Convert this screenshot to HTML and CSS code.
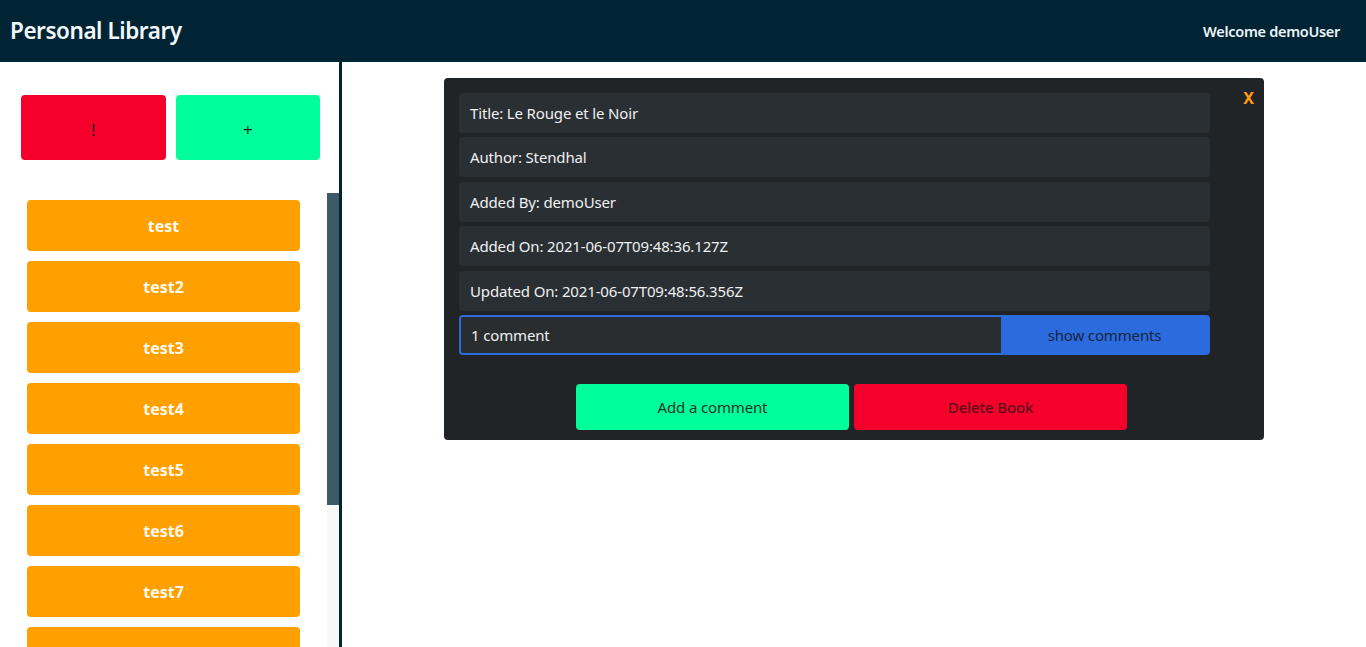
FILE: index.html
```html
<!DOCTYPE html>
<html>
<head>
<meta charset="utf-8">
<link rel="stylesheet" href="styles.css">
</head>
<body>
<header class="topbar">
  <h1 class="brand">Personal Library</h1>
  <div class="welcome">Welcome demoUser</div>
</header>
<div class="main">
  <aside class="sidebar">
    <div class="actions">
      <button class="act act-red">!</button>
      <button class="act act-green">+</button>
    </div>
    <div class="listwrap">
      <ul class="booklist">
        <li class="book">test</li>
        <li class="book">test2</li>
        <li class="book">test3</li>
        <li class="book">test4</li>
        <li class="book">test5</li>
        <li class="book">test6</li>
        <li class="book">test7</li>
        <li class="book">test8</li>
      </ul>
      <div class="scrollbar"><div class="thumb"></div></div>
    </div>
  </aside>
  <section class="content">
    <div class="modal">
      <div class="rows">
        <div class="row">Title: Le Rouge et le Noir</div>
        <div class="row">Author: Stendhal</div>
        <div class="row">Added By: demoUser</div>
        <div class="row">Added On: 2021-06-07T09:48:36.127Z</div>
        <div class="row">Updated On: 2021-06-07T09:48:56.356Z</div>
        <div class="comment-row">
          <div class="comment-input">1 comment</div>
          <div class="comment-btn">show comments</div>
        </div>
        <div class="buttons">
          <button class="mbtn mbtn-green">Add a comment</button>
          <button class="mbtn mbtn-red">Delete Book</button>
        </div>
      </div>
      <div class="close">X</div>
    </div>
  </section>
</div>
</body>
</html>
```
FILE: styles.css
```css
* { box-sizing: border-box; }
html, body { margin: 0; padding: 0; height: 100%; overflow: hidden; }
body {
  font-family: "Noto Sans", "Open Sans", sans-serif;
  background: #ffffff;
}
.topbar {
  height: 62px;
  background: #012434;
  display: flex;
  align-items: center;
  justify-content: space-between;
  padding: 0 26px 0 10px;
}
.brand {
  margin: 0;
  color: #f2f8fb;
  font-size: 22.5px;
  font-weight: 600;
  letter-spacing: -0.45px;
  padding-bottom: 2px;
}
.welcome {
  color: #eef4f8;
  font-size: 14.5px;
  font-weight: 600;
  letter-spacing: -0.3px;
  padding-bottom: 1px;
}
.main {
  display: flex;
  height: calc(100% - 62px);
}
.sidebar {
  width: 342px;
  border-right: 3px solid #012434;
  display: flex;
  flex-direction: column;
}
.actions {
  display: flex;
  gap: 10px;
  padding: 33px 19px 0 21px;
}
.act {
  flex: 1;
  height: 65px;
  border: none;
  border-radius: 4px;
  font-family: inherit;
  font-size: 17px;
  color: #1c1c1c;
  padding-top: 4px;
}
.act-red { background: #f5002a; }
.act-green { background: #00fe9b; }
.listwrap {
  margin-top: 33px;
  flex: 1;
  display: flex;
  overflow: hidden;
}
.booklist {
  list-style: none;
  margin: 0;
  padding: 7px 0 0 27px;
  width: 327px;
}
.book {
  width: 273px;
  height: 51px;
  margin-bottom: 10px;
  background: #ffa000;
  border-radius: 4px;
  color: #fff9ee;
  font-weight: 700;
  font-size: 16px;
  display: flex;
  align-items: center;
  justify-content: center;
}
.scrollbar {
  width: 12px;
  background: #f8f8f8;
}
.thumb {
  height: 312px;
  background: #3d5a66;
}
.content {
  flex: 1;
  padding: 16px 0 0 102px;
}
.modal {
  width: 820px;
  height: 362px;
  background: #202427;
  border-radius: 4px;
  display: flex;
  padding: 15px 0 10px 15px;
}
.rows {
  width: 751px;
  display: flex;
  flex-direction: column;
  gap: 4.5px;
}
.row {
  height: 40px;
  background: #2a2f33;
  border-radius: 4px;
  color: #eef0f2;
  font-size: 15px;
  display: flex;
  align-items: center;
  padding: 0 11px 0;
  letter-spacing: -0.15px;
}
.comment-row {
  height: 40px;
  display: flex;
  border: 2.5px solid #2b6bde;
  border-radius: 4px;
  background: #2b6bde;
}
.comment-input {
  width: 540px;
  background: #2a2d30;
  color: #eef0f2;
  font-size: 15px;
  display: flex;
  align-items: center;
  padding: 0 10px 0;
  letter-spacing: -0.15px;
  border-radius: 2px 0 0 2px;
}
.comment-btn {
  flex: 1;
  display: flex;
  align-items: center;
  justify-content: center;
  color: #16263e;
  font-size: 15px;
  letter-spacing: -0.15px;
}
.buttons {
  display: flex;
  gap: 5px;
  margin-top: 24.5px;
  padding-left: 117px;
}
.mbtn {
  width: 273px;
  height: 46px;
  border: none;
  border-radius: 4px;
  font-family: inherit;
  font-size: 15px;
  letter-spacing: -0.15px;
}
.mbtn-green { background: #00fe9b; color: #17372a; }
.mbtn-red { background: #f5002a; color: #5e0a1c; font-weight: 500; }
.close {
  flex: 1;
  color: #ff9a10;
  font-weight: 700;
  font-size: 16px;
  text-align: right;
  padding-right: 10px;
  margin-top: -6px;
}
```
